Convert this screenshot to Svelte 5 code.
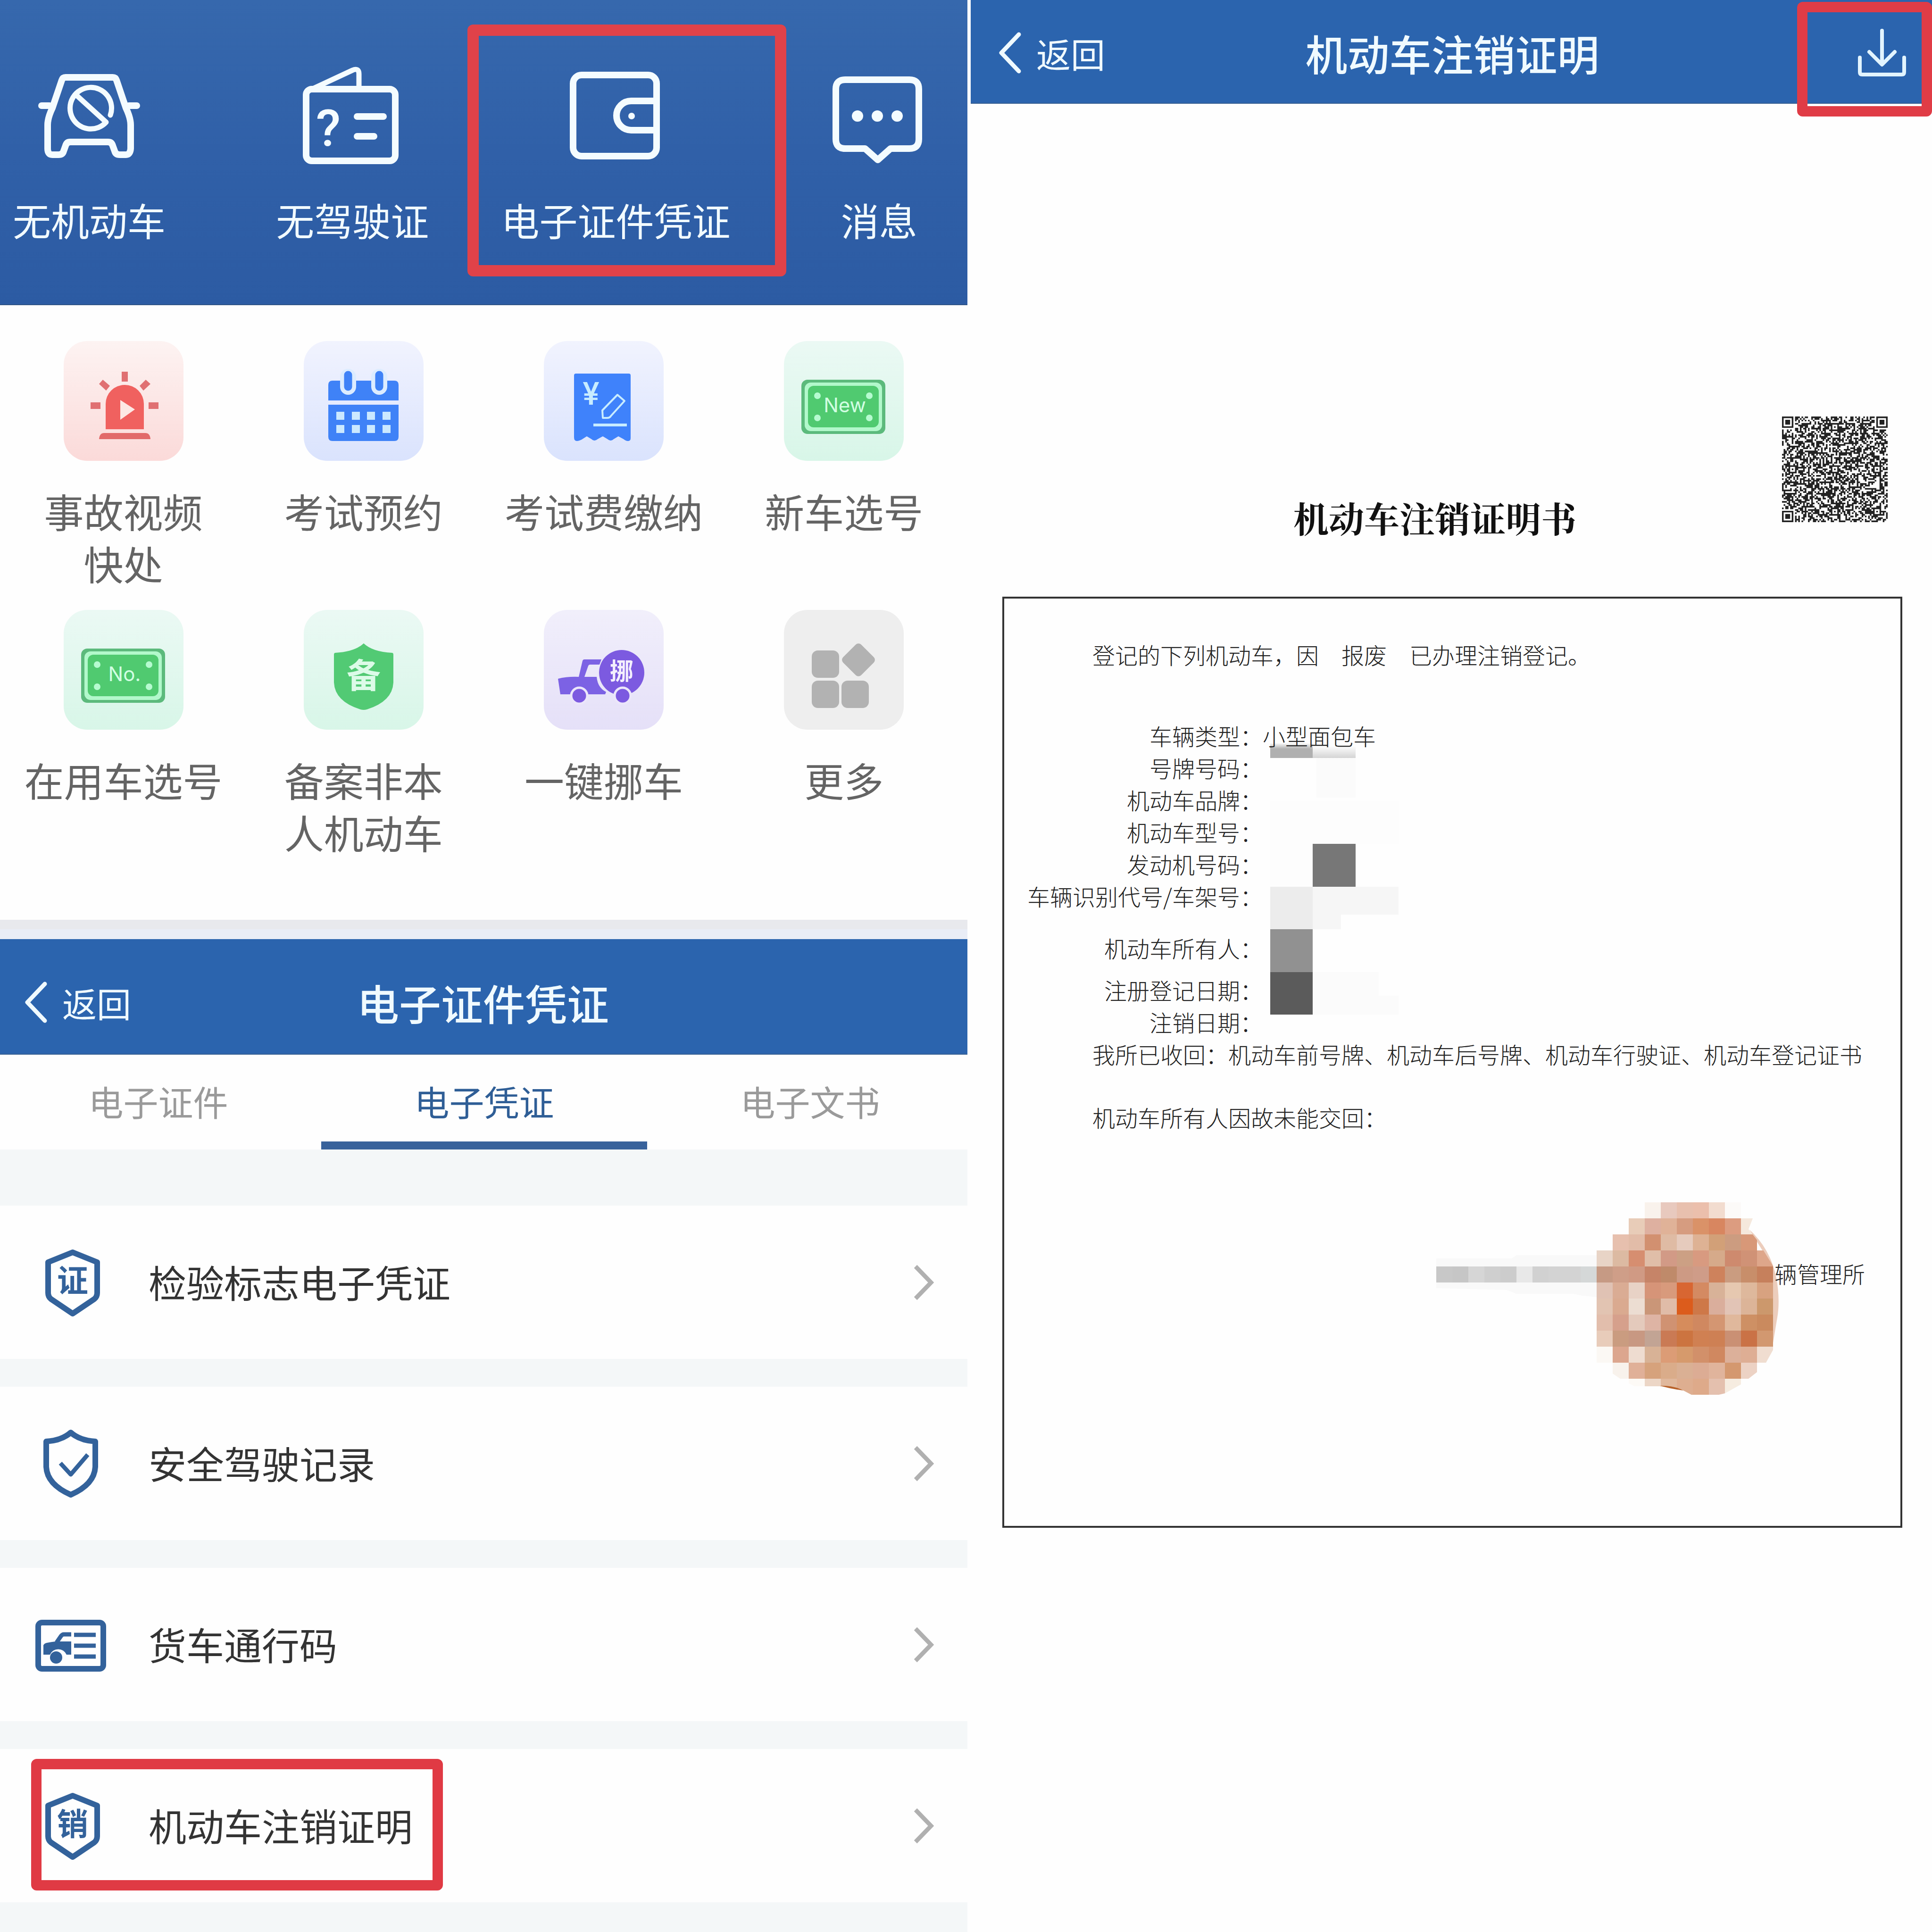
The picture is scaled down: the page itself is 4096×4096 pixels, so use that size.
<script>
  const shortcuts = [
    { label: '无机动车', icon: 'car' },
    { label: '无驾驶证', icon: 'license' },
    { label: '电子证件凭证', icon: 'wallet', marked: true },
    { label: '消息', icon: 'message' }
  ];

  const services = [
    { label: '事故视频\n快处', icon: 'siren', tone: 'red' },
    { label: '考试预约', icon: 'calendar', tone: 'blue' },
    { label: '考试费缴纳', icon: 'receipt', tone: 'blue' },
    { label: '新车选号', icon: 'plate', tone: 'green', plate: 'New' },
    { label: '在用车选号', icon: 'plate', tone: 'green', plate: 'No.' },
    { label: '备案非本\n人机动车', icon: 'shield', tone: 'green' },
    { label: '一键挪车', icon: 'truck', tone: 'purple' },
    { label: '更多', icon: 'more', tone: 'grey' }
  ];

  const tabs = ['电子证件', '电子凭证', '电子文书'];
  let activeTab = $state('电子凭证');

  const vouchers = [
    { label: '检验标志电子凭证', icon: 'badge', glyph: '证' },
    { label: '安全驾驶记录', icon: 'check' },
    { label: '货车通行码', icon: 'pass' },
    { label: '机动车注销证明', icon: 'badge', glyph: '销', marked: true }
  ];

  const fields = [
    { name: '车辆类型：', value: '小型面包车' },
    { name: '号牌号码：', value: '' },
    { name: '机动车品牌：', value: '' },
    { name: '机动车型号：', value: '' },
    { name: '发动机号码：', value: '' },
    { name: '车辆识别代号/车架号：', value: '' },
    { name: '机动车所有人：', value: '', space: 'wide' },
    { name: '注册登记日期：', value: '', space: 'mid' },
    { name: '注销日期：', value: '' }
  ];

  // QR pattern: finder and alignment marks over a seeded module field.
  const QR = 65;
  function buildQr() {
    let seed = 20231;
    const rand = () => {
      seed = (seed * 1103515245 + 12345) % 2147483648;
      return seed / 2147483648;
    };
    const finders = [[0, 0], [QR - 7, 0], [0, QR - 7]];
    const aligns = [[6, 32], [32, 6], [32, 32], [58, 32], [32, 58], [58, 58]];
    let d = '';
    for (let y = 0; y < QR; y++) {
      for (let x = 0; x < QR; x++) {
        let on = rand() < 0.54;
        for (const [fx, fy] of finders) {
          const r = Math.max(Math.abs(x - fx - 3), Math.abs(y - fy - 3));
          if (r <= 4) on = r === 3 || r < 2;
        }
        for (const [ax, ay] of aligns) {
          const r = Math.max(Math.abs(x - ax), Math.abs(y - ay));
          if (r <= 2) on = r !== 1;
        }
        if (on) d += `M${x} ${y}h1v1h-1z`;
      }
    }
    return d;
  }
  const qrPath = buildQr();

  // Colours of the masked seal, row by row.
  const seal = [
    '- - - f9f2ec e8c9be e8c0ae ebbfac f2dccf fcfaf8 - -',
    '- - e8ccb8 deb0a0 e0b298 d69c80 da9268 d88660 dc9c80 f5e8dc -',
    '- e7c0ae e2bca8 d29070 dfbba4 e6cbbd deb294 d2a078 cc9c80 d89878 -',
    'e8d4c6 dcbaa2 d68e70 e0bea8 d29a86 cca084 d89a80 d6aa8a ce8a6e d09276 dea68a',
    'c69a84 cf9e88 d09a84 c68468 bf8a6a cd9a84 cf9c88 ce825c ca9c80 c88e6a c6805c',
    'e0c2b4 daac94 e8d2c6 d69478 d89a7c d86632 d48a62 d8b298 e6c8b0 deb89c d8a280',
    'e2c4b2 daaa90 ecddd2 ca9678 e0bca8 dc5c1c ce7848 daae9c e2c4b6 dcb498 cc986c',
    'e2beac d6a08c e4cabc deb4a4 d09272 d68c5c d08860 d49672 e0b89c ce9064 ca8a5e',
    'e8ccba ca9c80 c89882 c2a494 ca7a54 cc7440 d08052 ce8054 ca9074 ca7246 d29870',
    'fbf8f4 dca68e eedcd0 d8b296 dc9c76 d69a6c d2906a d08860 dcb09a deae94 f0ddd0',
    '- f8f2ec e0b098 d6a27c daac8a dab094 dcac94 e0b49c d4986f ecd2c4 -',
    '- - fdfaf6 ecd6c6 e0b89c deae90 deaa8a e4c0ae f6ece0 - -'
  ].map((row) => row.split(' '));
  const strip = ['c8c8c8', 'c6c6c6', 'd6d6d6', 'cfcfcf', 'cccccc', 'e8e8e8', 'd1d1d1', 'd3d3d3', 'd3d3d3', 'd5d8d8'];
</script>

<div class="page">
  <div class="column">
    <nav class="hero">
      {#each shortcuts as item}
        <button class="shortcut">
          <svg class="shortcut-icon" viewBox="0 0 240 240" aria-hidden="true">
            {#if item.icon === 'car'}
              <path d="M70 39H170Q176 39 178 45L198 104Q208 125 208 140V190Q207 203 198 203H185Q176 203 174 195L170 184Q168 176 160 176H80Q72 176 70 184L66 195Q64 203 55 203H42Q32 203 32 190V140Q32 125 42 104L62 45Q64 39 70 39Z" />
              <path d="M19 99H36M204 99H221" />
              <path class="thin" d="M165 119A44 44 0 1 0 156 134L91 75" />
            {:else if item.icon === 'license'}
              <rect x="22" y="64" width="189" height="152" rx="12" />
              <path class="thin" d="M30 66L120 24Q134 18 134 32V62" />
              <text x="69" y="184" class="mark-text">?</text>
              <path d="M130 122H186M130 164H166" />
            {:else if item.icon === 'wallet'}
              <rect x="29" y="34" width="177" height="172" rx="18" />
              <path d="M206 89H152A31 31 0 0 0 152 151H206" />
              <circle class="dot" cx="153" cy="121" r="7" />
            {:else}
              <path d="M48 44H184Q204 44 204 64V170Q204 190 184 190H144L117 214L90 190H48Q28 190 28 170V64Q28 44 48 44Z" />
              <circle class="dot" cx="74" cy="121" r="12" />
              <circle class="dot" cx="116" cy="121" r="12" />
              <circle class="dot" cx="158" cy="121" r="12" />
            {/if}
          </svg>
          <span>{item.label}</span>
          {#if item.marked}<i class="frame frame-shortcut"></i>{/if}
        </button>
      {/each}
    </nav>

    <section class="services">
      {#each services as item}
        <button class="service">
          <svg class="tile {item.tone}" viewBox="0 0 254 254" aria-hidden="true">
            {#if item.icon === 'siren'}
              <g fill="#f0615f">
                <path d="M89 187V133A40.500 40 0 0 1 170 133V187Z" />
                <path fill="#e26a6a" d="M75 208Q76 195 86 195H173Q183 195 184 208Z" />
                <path fill="#e07072" d="M123 65h13v21h-13zM57 130h21v14h-21zM180 130h21v14h-21zM83 82L98 95L90 105L75 91ZM174 82L184 91L169 105L161 95Z" />
                <path fill="#fde8e4" d="M120 125L151 145L120 167Z" />
              </g>
            {:else if item.icon === 'calendar'}
              <g fill="#3f82f7">
                <path d="M52 126V93Q52 84 61 84H192Q201 84 201 93V126ZM52 135H201V203Q201 212 192 212H61Q52 212 52 203Z" />
                <path fill="none" stroke="#dcecff" stroke-width="34" stroke-linecap="round" d="M94 76V97M160 76V97" />
                <path fill="none" stroke="#3f82f7" stroke-width="17" stroke-linecap="round" d="M94 72V97M160 72V97" />
                <path fill="#cbe9ff" d="M69 150h17v17h-17zM102 150h17v17h-17zM134 150h17v17h-17zM167 150h17v17h-17zM69 178h17v17h-17zM102 178h17v17h-17zM134 178h17v17h-17zM167 178h17v17h-17z" />
              </g>
            {:else if item.icon === 'receipt'}
              <path fill="#3f82fb" d="M68 69H180Q184 69 184 73V206Q184 212 178 212Q174 212 169 208L158 202L148 208Q142 214 135 208L125 202L114 208Q107 214 101 208L91 202L80 209Q64 217 64 204V73Q64 69 68 69Z" />
              <text class="yen" x="100" y="135">¥</text>
              <path fill="none" stroke="#c8ecff" stroke-width="4" stroke-linejoin="round" d="M156 114L171 127L142 159Q140 163 134 163H125L124 147Z" />
              <path fill="none" stroke="#c8ecff" stroke-width="6" d="M105 178H176" />
            {:else if item.icon === 'plate'}
              <rect x="37" y="82" width="178" height="115" rx="13" fill="#5cba7c" />
              <rect x="44" y="88" width="164" height="103" rx="13" fill="#b2f8cb" />
              <rect x="51" y="95" width="150" height="88" rx="12" fill="#50ca70" />
              <g fill="#b6fbd0">
                <circle cx="71" cy="116" r="7" />
                <circle cx="181" cy="116" r="7" />
                <circle cx="71" cy="163" r="7" />
                <circle cx="181" cy="163" r="7" />
              </g>
              <text class="plate-text" x="129" y="151">{item.plate}</text>
            {:else if item.icon === 'shield'}
              <path fill="#52ca74" d="M127 71Q146 89 187 91Q190 91 190 95V154Q188 194 134 211Q127 213 120 211Q66 194 64 154V95Q64 91 67 91Q108 89 127 71Z" />
              <text class="shield-text" x="127" y="165">备</text>
            {:else if item.icon === 'truck'}
              <path fill="#7c62e4" fill-rule="evenodd" d="M30 146Q50 141 74 142L82 108Q83 105 86 105H122L118 116H98Q95 116 94 119L86 142H112Q114 165 132 174L130 179H35Z" />
              <circle cx="165" cy="133" r="48" fill="#7c5ae0" />
              <g fill="#7c5ae0" stroke="#ebe6fa" stroke-width="5">
                <circle cx="75" cy="182" r="17" />
                <circle cx="167" cy="182" r="17" />
              </g>
              <text class="truck-text" x="165" y="148">挪</text>
            {:else}
              <g fill="#b2b2b2">
                <rect x="59" y="86" width="58" height="58" rx="13" />
                <rect x="59" y="150" width="58" height="58" rx="13" />
                <rect x="122" y="150" width="58" height="58" rx="13" />
                <rect x="131" y="79" width="54" height="54" rx="8" transform="rotate(45 158 106)" />
              </g>
            {/if}
          </svg>
          <span>{item.label}</span>
        </button>
      {/each}
    </section>

    <div class="divider"></div>

    <header class="bar">
      <button class="back">
        <svg viewBox="0 0 48 88" aria-hidden="true"><path d="M43 5L6 44L43 83" /></svg>
        返回
      </button>
      <h1>电子证件凭证</h1>
    </header>

    <div class="tabs" role="tablist">
      {#each tabs as tab}
        <button role="tab" class:active={tab === activeTab} aria-selected={tab === activeTab} onclick={() => (activeTab = tab)}>{tab}</button>
      {/each}
    </div>

    <div class="vouchers">
      {#each vouchers as item}
        <button class="voucher">
          <svg class="voucher-icon" viewBox="0 0 150 150" aria-hidden="true">
            {#if item.icon === 'badge'}
              <path d="M79 11L131 32V97Q131 105 125 110L79 141L33 110Q27 105 27 97V32Z" />
              <text x="79" y="95">{item.glyph}</text>
            {:else if item.icon === 'check'}
              <path d="M75 9Q94 26 127 28V82Q125 119 75 141Q25 119 23 82V28Q56 26 75 9Z" />
              <path class="fine" d="M53 74L75 98L111 56" />
            {:else}
              <rect x="6" y="28" width="138" height="98" rx="8" />
              <path class="fine" d="M82 54H128M82 77H128M82 100H128" />
              <path class="fine" d="M76 53H60Q57 53 54 57L45 70" />
              <path class="solid" d="M17 76Q19 72 24 71Q34 69 43 68H76V96H66A19 19 0 0 0 31 96H17Z" />
              <circle class="solid" cx="44" cy="102" r="13" />
            {/if}
          </svg>
          <span>{item.label}</span>
          <svg class="chevron" viewBox="0 0 44 76" aria-hidden="true"><path d="M5 4L38 38L5 72" /></svg>
          {#if item.marked}<i class="frame frame-voucher"></i>{/if}
        </button>
      {/each}
    </div>
  </div>

  <div class="column">
    <header class="bar top">
      <button class="back">
        <svg viewBox="0 0 48 88" aria-hidden="true"><path d="M43 5L6 44L43 83" /></svg>
        返回
      </button>
      <h1>机动车注销证明</h1>
      <button class="download" aria-label="下载">
        <svg viewBox="0 0 102 102" aria-hidden="true">
          <path d="M51 4V74M24 49L51 76L78 49M4 61V92Q4 97 9 97H93Q98 97 98 92V61" />
        </svg>
      </button>
      <i class="frame frame-download"></i>
    </header>

    <article>
      <div class="doc-head">
        <h2>机动车注销证明书</h2>
        <svg class="qr" viewBox="0 0 65 65" role="img" aria-label="二维码"><path d={qrPath} /></svg>
      </div>

      <div class="sheet">
        <p>登记的下列机动车，因　报废　已办理注销登记。</p>

        <div class="details">
          <svg class="mask" viewBox="0 0 362 576" aria-hidden="true">
            <defs>
              <linearGradient id="fadeDark" x1="0" y1="0" x2="0" y2="1">
                <stop offset="0" stop-color="#b0b0b0" stop-opacity="0" />
                <stop offset="0.4" stop-color="#b0b0b0" />
              </linearGradient>
              <linearGradient id="fadeLight" x1="0" y1="0" x2="0" y2="1">
                <stop offset="0.2" stop-color="#d4d4d4" stop-opacity="0" />
                <stop offset="1" stop-color="#d4d4d4" />
              </linearGradient>
            </defs>
            <rect width="90" height="32" fill="url(#fadeDark)" />
            <rect x="90" width="91" height="32" fill="url(#fadeLight)" />
            <path fill="#fbfbfb" d="M98 32h83v84h-83z" />
            <path fill="#fdfdfd" d="M0 124h272v90h-272zM0 214h90v91h-90z" />
            <path fill="#777777" d="M90 214h91v91h-91z" />
            <path fill="#ececec" d="M0 305h90v90h-90z" />
            <path fill="#f6f6f6" d="M90 305h182v59h-122v31h-60z" />
            <path fill="#919191" d="M0 395h90v91h-90z" />
            <path fill="#5b5b5b" d="M0 486h90v90h-90z" />
            <path fill="#fbfbfb" d="M90 486h140v50h42v40h-182z" />
          </svg>
          <table>
            <tbody>
              {#each fields as field}
                <tr class={field.space}>
                  <th scope="row">{field.name}</th>
                  <td>{field.value}</td>
                </tr>
              {/each}
            </tbody>
          </table>
        </div>

        <p>我所已收回：机动车前号牌、机动车后号牌、机动车行驶证、机动车登记证书</p>
        <p class="missing">机动车所有人因故未能交回：</p>

        <div class="issuer">
          <svg class="seal" viewBox="0 0 717 410" aria-hidden="true">
            <defs>
              <clipPath id="sealRound">
                <path d="M340 0H672L671 34L662 57L680 80L698 109L714 135V313L699 340L680 360L662 374L646 386L612 405L599 408H541L522 398Q500 390 473 390H420L390 374L340 340Z" />
              </clipPath>
            </defs>
            <path fill="#f9f9f9" d="M0 119H160L170 112H340V201L310 198L290 194H170L150 186L0 182Z" />
            {#each strip as color, x}
              <rect x={x * 34} y="136" width="34" height="34" fill="#{color}" />
            {/each}
            <path fill="#eccdbc" d="M664 58Q708 98 721 160Q730 210 722 250L712 310V135Z" />
            <g clip-path="url(#sealRound)" shape-rendering="crispEdges">
              {#each seal as row, y}
                {#each row as color, x}
                  {#if color !== '-'}
                    <rect x={340 + x * 34} y={y * 34} width="34" height="34" fill="#{color}" />
                  {/if}
                {/each}
              {/each}
            </g>
            <path fill="#b8622a" d="M474 389Q504 388 524 399Q500 396 474 389Z" />
          </svg>
          <span>辆管理所</span>
        </div>
      </div>
    </article>
  </div>
</div>

<style>
  :global(body) {
    background: #fefefe;
    font-family: 'Noto Sans CJK SC', sans-serif;
  }

  .page {
    display: grid;
    grid-template-columns: 2051fr 2038fr;
    gap: 7px;
    min-height: 100vh;
  }

  .column {
    display: flex;
    flex-direction: column;
    min-width: 0;
    overflow: hidden;
  }

  button {
    margin: 0;
    padding: 0;
    border: 0;
    background: none;
    color: inherit;
    font: inherit;
    cursor: pointer;
  }

  h1,
  h2,
  p {
    margin: 0;
  }

  .frame {
    position: absolute;
    box-sizing: border-box;
    border: 22px solid #e03c46;
    border-radius: 12px;
    pointer-events: none;
  }

  /* Shortcut strip: the outer items bleed past both edges */
  .hero {
    display: grid;
    grid-template-columns: repeat(4, 1fr);
    margin: 0 -92px 0 -90px;
    padding: 125px 0 142px;
    background: linear-gradient(#3668ad, #3060a8 50%, #2c5ba3);
    color: #f2fbff;
    box-shadow: inset 0 -2px 0 #2f5486;
  }

  .shortcut {
    position: relative;
    display: flex;
    flex-direction: column;
    align-items: center;
    gap: 60px;
    font-size: 81px;
    line-height: 80px;
  }

  .shortcut-icon {
    width: 240px;
    height: 240px;
    fill: none;
    stroke: #f4fcff;
    stroke-width: 14px;
    stroke-linecap: round;
    stroke-linejoin: round;
  }

  .shortcut-icon .thin {
    stroke-width: 11px;
  }

  .shortcut-icon .dot,
  .shortcut-icon .mark-text {
    fill: #f4fcff;
    stroke: none;
  }

  .mark-text {
    font: 500 108px Roboto, sans-serif;
    text-anchor: middle;
  }

  .frame-shortcut {
    top: -73px;
    left: -36px;
    width: 676px;
    height: 534px;
    border-width: 24px;
    border-color: #e04249;
  }

  /* Service grid */
  .services {
    display: grid;
    grid-template-columns: repeat(4, 1fr);
    gap: 44px 0;
    padding: 76px 7px 131px;
  }

  .service {
    display: flex;
    flex-direction: column;
    align-items: center;
    gap: 50px;
    color: #646464;
    font-size: 84px;
    line-height: 111px;
    white-space: pre;
  }

  .tile {
    width: 254px;
    height: 254px;
    border-radius: 50px;
  }

  .tile.red {
    background: linear-gradient(#fdf3f2, #fbdad9);
  }

  .tile.blue {
    background: linear-gradient(#f1f3fe, #dae3fd);
  }

  .tile.green {
    background: linear-gradient(#ebf9f4, #d8f6e8);
  }

  .tile.purple {
    background: linear-gradient(#f1effb, #e5e0f8);
  }

  .tile.grey {
    background: #eee;
  }

  .tile text {
    text-anchor: middle;
  }

  .yen {
    fill: #c8ecff;
    font: 500 66px Roboto, sans-serif;
  }

  .plate-text {
    fill: #d2ffe2;
    font: 400 42px Inter, sans-serif;
  }

  .shield-text {
    fill: #dcfbe8;
    font: 700 72px 'Noto Sans CJK SC', sans-serif;
  }

  .truck-text {
    fill: #f3effd;
    font: 700 50px 'Noto Sans CJK SC', sans-serif;
  }

  .divider {
    height: 41px;
    background: linear-gradient(#e8e9ed 48%, #e9edf6 48%);
  }

  /* Title bars */
  .bar {
    position: relative;
    display: grid;
    grid-template-columns: 1fr auto 1fr;
    align-items: center;
    box-sizing: border-box;
    height: 245px;
    padding: 22px 55px 0 52px;
    background: #2b64ae;
    box-shadow: inset 0 -2px 0 #365f92;
    color: #f0faff;
  }

  .bar.top {
    height: 220px;
    padding: 4px 55px 0 59px;
  }

  .bar h1 {
    font-size: 89px;
    font-weight: 500;
    line-height: 120px;
  }

  .back {
    display: flex;
    align-items: center;
    gap: 32px;
    font-size: 73px;
    line-height: 100px;
  }

  .back svg {
    width: 48px;
    height: 88px;
    fill: none;
    stroke: #f0faff;
    stroke-width: 9px;
    stroke-linecap: round;
    stroke-linejoin: round;
  }

  .download {
    justify-self: end;
    display: flex;
  }

  .download svg {
    width: 102px;
    height: 102px;
    fill: none;
    stroke: #e2f4ff;
    stroke-width: 8px;
    stroke-linecap: round;
    stroke-linejoin: round;
  }

  .frame-download {
    top: 4px;
    right: 0;
    width: 286px;
    height: 243px;
    z-index: 1;
  }

  /* Tabs */
  .tabs {
    display: grid;
    grid-template-columns: repeat(3, 1fr);
    margin: 0 -12px 0 -10px;
  }

  .tabs button {
    box-sizing: border-box;
    height: 201px;
    border-bottom: 17px solid transparent;
    padding-top: 12px;
    color: #9a9a9a;
    font-size: 74px;
    line-height: 100px;
  }

  .tabs button.active {
    border-color: #38629b;
    color: #2f5e96;
  }

  /* Voucher list */
  .vouchers {
    flex: 1;
    display: flex;
    flex-direction: column;
    gap: 59px;
    padding: 119px 0 61px;
    background: #f4f7f8;
  }

  .voucher {
    position: relative;
    display: flex;
    align-items: center;
    gap: 90px;
    height: 325px;
    padding: 0 71px 0 75px;
    background: #fefefe;
    color: #333;
    font-size: 80px;
    line-height: 110px;
    text-align: left;
  }

  .voucher span {
    flex: 1;
    padding-bottom: 6px;
  }

  .voucher-icon {
    width: 150px;
    height: 150px;
    fill: none;
    stroke: #33629b;
    stroke-width: 12px;
    stroke-linejoin: round;
  }

  .voucher-icon .fine {
    stroke-width: 9px;
  }

  .voucher-icon .solid,
  .voucher-icon text {
    fill: #33629b;
    stroke: none;
  }

  .voucher-icon text {
    font: 700 66px 'Noto Sans CJK SC', sans-serif;
    text-anchor: middle;
  }

  .chevron {
    width: 44px;
    height: 76px;
    fill: none;
    stroke: #b0b0b0;
    stroke-width: 9px;
  }

  .frame-voucher {
    top: 21px;
    left: 66px;
    width: 873px;
    height: 279px;
    border-color: #e03a44;
  }

  /* Certificate */
  .doc-head {
    display: flex;
    align-items: flex-end;
    height: 259px;
    margin-top: 663px;
    padding: 0 94px 0 248px;
  }

  .doc-head h2 {
    flex: 1;
    color: #111;
    font-family: 'Noto Serif CJK SC', 'Noto Sans CJK SC', serif;
    font-size: 75px;
    font-weight: 700;
    line-height: 90px;
    text-align: center;
  }

  .qr {
    align-self: flex-start;
    width: 224px;
    height: 224px;
    fill: #222;
  }

  .sheet {
    margin: 123px 63px 0 67px;
    padding: 84px 0 276px;
    border: 4px solid #333;
    color: #222;
    font-size: 48px;
    font-weight: 300;
    line-height: 68px;
  }

  .sheet p {
    padding-left: 187px;
    white-space: nowrap;
  }

  .details {
    position: relative;
    margin-top: 104px;
  }

  .mask {
    position: absolute;
    top: 50px;
    left: 564px;
    width: 362px;
    height: 576px;
  }

  table {
    position: relative;
    width: 100%;
    border-collapse: collapse;
  }

  th,
  td {
    height: 68px;
    padding: 0;
    font-weight: 300;
    text-align: left;
    vertical-align: bottom;
  }

  th {
    width: 548px;
    text-align: right;
    white-space: nowrap;
  }

  .wide th {
    height: 110px;
  }

  .mid th {
    height: 89px;
  }

  .sheet .missing {
    margin-top: 66px;
  }

  .issuer {
    display: flex;
    justify-content: flex-end;
    align-items: flex-start;
    margin-top: 147px;
    padding-right: 75px;
  }

  .seal {
    overflow: visible;
    width: 717px;
    height: 410px;
  }

  .issuer span {
    margin-top: 116px;
  }
</style>
